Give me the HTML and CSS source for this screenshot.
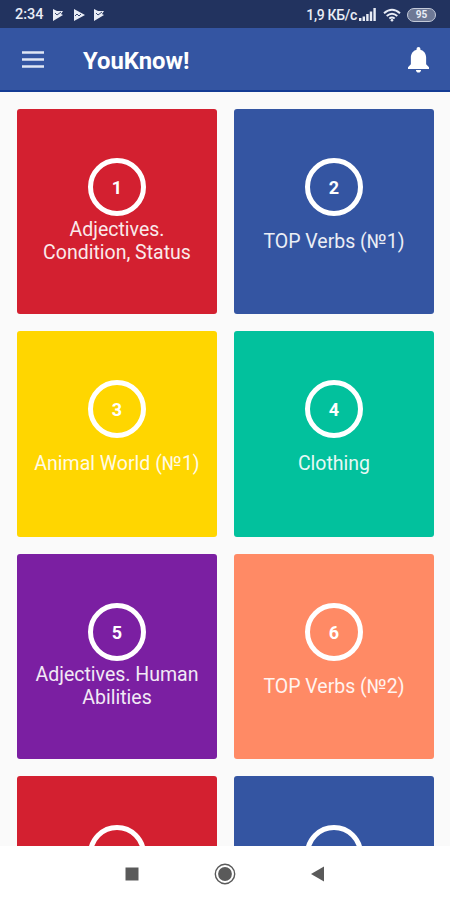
FILE: index.html
```html
<!DOCTYPE html>
<html lang="en">

<head>
	<meta charset="UTF-8">
	<meta name="viewport" content="width=device-width, initial-scale=1.0">
	<title>YouKnow!</title>
	<link rel="stylesheet" href="styles.css">
</head>

<body>
	<div class="screen">
		<div class="status">
			<span class="time">2:34</span>
			<svg class="play" viewBox="0 0 12 14"><path d="M1 1l4 2 6 0-2 3 2 1-10 6z" /><path class="cut" d="M3 5l2 2 4-3" /></svg>
			<svg class="play" viewBox="0 0 12 14"><path d="M1 1l11 6-11 6z" /><path class="cut" d="M2 8l2-2 2 2 2-2" /></svg>
			<svg class="play" viewBox="0 0 12 14"><path d="M1 1l4 2 6 0-2 3 2 1-10 6z" /><path class="cut" d="M3 5l2 2 4-3" /></svg>
			<span class="speed">1,9 КБ/с</span>
			<svg class="signal" viewBox="0 0 17 13"><path d="M0 10h2.400v3H0zM3.600 8.500H6V13H3.600zM7.200 6h2.400v7H7.200zM10.800 3.500h2.400V13h-2.400zM14.400 0h2.400v13h-2.400z" /></svg>
			<svg class="wifi" viewBox="0 0 18 14"><path d="M1 5.200q8-7 16 0M3.700 8q5.300-4.500 10.600 0M6.300 10.500q2.700-2 5.400 0" /><circle cx="9" cy="12.300" r="1.300" /></svg>
			<span class="battery">95</span>
		</div>

		<header class="bar">
			<svg class="menu" viewBox="0 0 22 17"><path d="M0 1.500h22M0 8.500h22M0 15.500h22" /></svg>
			<h1>YouKnow!</h1>
			<svg class="bell" viewBox="0 0 22 27"><path d="M11 0c1.300 0 2 .9 2 2v.8c3.800 1 6 4.200 6 8.200v7l3 3v2H0v-2l3-3v-7c0-4 2.200-7.200 6-8.200V2c0-1.100.7-2 2-2zM8.300 24h5.400c0 1.600-1.100 2.700-2.700 2.700S8.300 25.600 8.300 24z" /></svg>
		</header>

		<main class="list">
			<div class="card red">
				<div class="num">1</div>
				<p>Adjectives. Condition, Status</p>
			</div>
			<div class="card blue">
				<div class="num">2</div>
				<p>TOP Verbs (№1)</p>
			</div>
			<div class="card yellow">
				<div class="num">3</div>
				<p>Animal World (№1)</p>
			</div>
			<div class="card green">
				<div class="num">4</div>
				<p>Clothing</p>
			</div>
			<div class="card purple">
				<div class="num">5</div>
				<p>Adjectives. Human Abilities</p>
			</div>
			<div class="card orange">
				<div class="num">6</div>
				<p>TOP Verbs (№2)</p>
			</div>
			<div class="card red">
				<div class="num"></div>
			</div>
			<div class="card blue">
				<div class="num"></div>
			</div>
		</main>

		<nav class="keys">
			<svg viewBox="0 0 24 24"><path d="M5.500 5.500h13v13h-13z" /></svg>
			<svg viewBox="0 0 24 24"><circle class="ring" cx="12" cy="12" r="9.700" /><circle cx="12" cy="12" r="6.900" /></svg>
			<svg viewBox="0 0 24 24"><path d="M18 4.500v15L5 12z" /></svg>
		</nav>
	</div>
</body>

</html>
```
FILE: styles.css
```css
body,
h1,
p {
	margin: 0;
}

body {
	font-family: Roboto, "Noto Sans", sans-serif;
	color: #fff;
}

svg {
	display: block;
	flex: none;
	fill: currentColor;
}

.screen {
	display: flex;
	flex-direction: column;
	width: 450px;
	height: 900px;
	overflow: hidden;
	background-color: #fafafa;
}

/* status bar */
.status {
	display: flex;
	flex: none;
	align-items: center;
	box-sizing: border-box;
	height: 28px;
	padding: 1px 14px 0 15px;
	background-color: #22335f;
	color: #e9edf6;
	font-size: 14.5px;
	font-weight: 500;
}

.time {
	width: 37px;
}

.play {
	width: 12px;
	height: 14px;
	margin-right: 8.5px;
}

.play .cut {
	fill: none;
	stroke: #22335f;
	stroke-width: .9;
}

.speed {
	margin-left: auto;
	font-size: 14px;
	letter-spacing: -.3px;
}

.signal {
	width: 17px;
	height: 13px;
	margin-left: 2px;
}

.wifi {
	width: 18px;
	height: 14px;
	margin: 0 6px 0 7px;
}

.wifi path {
	fill: none;
	stroke: currentColor;
	stroke-width: 1.9;
}

.battery {
	box-sizing: border-box;
	width: 29px;
	height: 14px;
	border: 1.5px solid #c3cad9;
	border-radius: 7px;
	background-color: #6d7895;
	font-size: 10px;
	font-weight: 700;
	line-height: 12px;
	text-align: center;
}

/* app bar */
.bar {
	display: flex;
	flex: none;
	align-items: center;
	box-sizing: border-box;
	height: 64px;
	padding: 1px 21px 0 22px;
	border-bottom: 2px solid #143c94;
	background-color: #3455a2;
}

.menu {
	width: 22px;
	height: 17px;
	margin-right: 39px;
	stroke: #dfe6f5;
	stroke-width: 2.6;
}

.bar h1 {
	flex: 1;
	padding-top: 3px;
	font-size: 23.8px;
	font-weight: 700;
	line-height: 28px;
}

.bell {
	width: 21px;
	height: 26px;
}

/* topics */
.list {
	display: grid;
	flex: 1;
	grid-template-columns: 200px 200px;
	grid-auto-rows: 205.500px;
	gap: 17px;
	min-height: 0;
	padding: 16.800px 16px 0 17px;
	overflow: hidden;
}

.card {
	display: flex;
	flex-direction: column;
	align-items: center;
	box-sizing: border-box;
	padding: 49px 15px 0;
	border-radius: 3px;
}

.red {
	background-color: #d32030;
}

.blue {
	background-color: #3455a2;
}

.yellow {
	background-color: #ffd600;
}

.green {
	background-color: #02c19d;
}

.purple {
	background-color: #7b1fa2;
}

.orange {
	background-color: #ff8a65;
}

.num {
	flex: none;
	box-sizing: border-box;
	width: 58px;
	height: 58px;
	border: 5px solid #fff;
	border-radius: 50%;
	font-size: 18px;
	font-weight: 700;
	line-height: 49px;
	text-align: center;
}

.card p {
	display: flex;
	align-items: center;
	height: 46px;
	margin-top: 2.500px;
	font-size: 19.5px;
	line-height: 23px;
	text-align: center;
	opacity: .9;
}

/* system buttons */
.keys {
	display: flex;
	flex: none;
	justify-content: center;
	gap: 69px;
	box-sizing: border-box;
	height: 54px;
	padding-top: 15.500px;
	background-color: #fff;
	color: #5a5a5a;
}

.keys svg {
	width: 24px;
	height: 24px;
}

.keys .ring {
	fill: none;
	stroke: currentColor;
	stroke-width: 1.4;
}
```
